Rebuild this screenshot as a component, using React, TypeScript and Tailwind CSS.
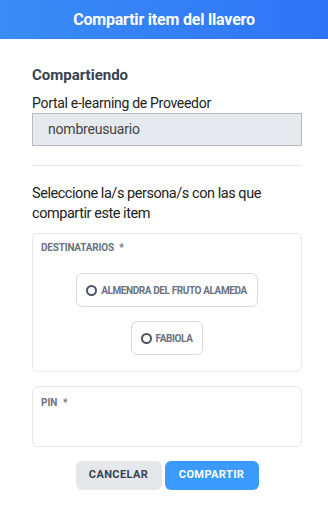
export default function App() {
  const recipients = ['ALMENDRA DEL FRUTO ALAMEDA', 'FABIOLA']

  return (
    <div className="w-[328px] h-[508px] bg-white font-['Roboto',sans-serif] overflow-hidden">
      {/* header */}
      <div className="h-[39px] flex items-center justify-center bg-gradient-to-r from-[#3a8cf6] to-[#2f74f6]">
        <h1 className="text-white text-[16px] font-bold tracking-[-0.2px]">
          Compartir item del llavero
        </h1>
      </div>

      <div className="pl-8 pr-[26px] pt-[26px]">
        <h2 className="text-[15px] font-bold text-[#374151] leading-[20px]">
          Compartiendo
        </h2>
        <p className="mt-[9px] text-[14px] leading-[18px] text-[#222] tracking-[-0.3px]">Portal e-learning de Proveedor</p>
        <div className="mt-[1px] h-[33px] border border-[#b6bbc2] bg-[#e6e9ee] flex items-center pl-[15px] text-[14px] text-[#444] tracking-[-0.2px]">
          nombreusuario
        </div>

        <div className="mt-[19px] border-t border-[#e5e7eb]" />

        <p className="mt-[18px] text-[14.5px] leading-[20px] text-[#222] tracking-[-0.45px]">
          Seleccione la/s persona/s con las que compartir este item
        </p>

        {/* destinatarios */}
        <div className="mt-[9px] h-[139px] border border-[#e5e7eb] rounded-md px-[8px] pt-[6px]">
          <div className="text-[10px] font-bold text-[#6b7280] tracking-[-0.2px]">
            DESTINATARIOS <span className="ml-[3px]">*</span>
          </div>
          <div className="mt-[18px] flex flex-col items-center gap-[14px]">
            {recipients.map((r) => (
              <button
                key={r}
                className="h-[34px] pl-[9px] pr-[10px] border border-[#d6d9de] rounded-md flex items-center gap-[4px] text-[10px] font-bold text-[#6b7280] tracking-[-0.4px]"
              >
                <span className="w-[11px] h-[11px] rounded-full border-2 border-[#4b5563]" />
                {r}
              </button>
            ))}
          </div>
        </div>

        {/* pin */}
        <div className="mt-[14px] h-[61px] border border-[#e5e7eb] rounded-md px-[8px] pt-[8px]">
          <div className="text-[10px] font-bold text-[#6b7280]">
            PIN <span className="ml-[3px]">*</span>
          </div>
        </div>

        <div className="mt-[14px] flex justify-center gap-[3px]">
          <button className="w-[86px] h-[29px] rounded-md bg-[#e5e7eb] text-[#374151] text-[11px] font-bold tracking-[0.4px]">
            CANCELAR
          </button>
          <button className="w-[94px] h-[29px] rounded-md bg-[#3b9bfd] text-white text-[11px] font-bold tracking-[0.4px]">
            COMPARTIR
          </button>
        </div>
      </div>
    </div>
  )
}
